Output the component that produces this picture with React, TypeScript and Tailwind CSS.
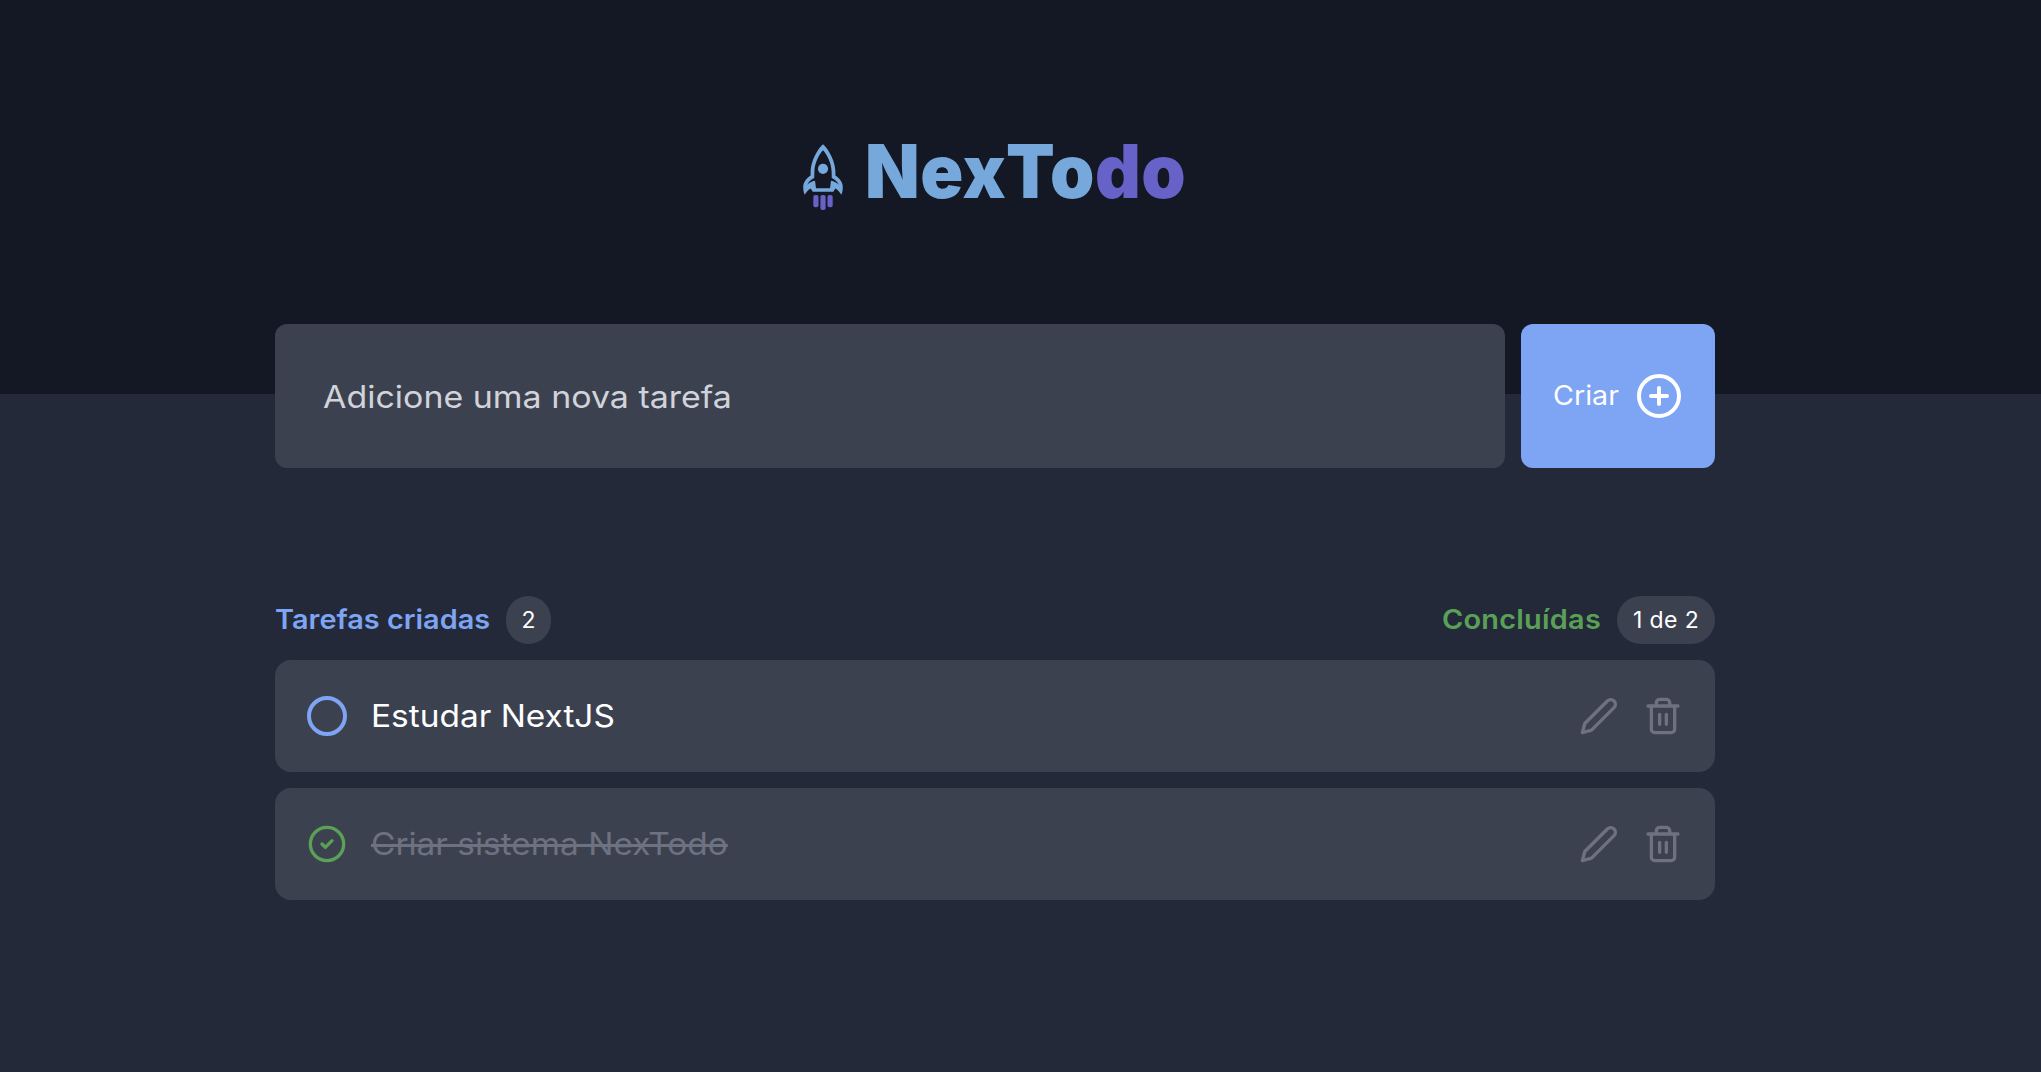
import { useState } from 'react';

type Task = { id: number; title: string; done: boolean };

const initialTasks: Task[] = [
  { id: 1, title: 'Estudar NextJS', done: false },
  { id: 2, title: 'Criar sistema NexTodo', done: true },
];

const stroke = {
  viewBox: '0 0 24 24',
  fill: 'none',
  stroke: 'currentColor',
  strokeWidth: 2,
  strokeLinecap: 'round',
  strokeLinejoin: 'round',
} as const;

function RocketIcon() {
  return (
    <svg className="mt-1.5 h-[74px] w-[46px] shrink-0" viewBox="800 140 46 74">
      <path
        fill="#76a8db"
        fillRule="evenodd"
        d="M823 144.3C829 149.5 835.4 162 835.4 171.5L835.4 175.4C839.5 178 842.8 182 842.8 187C842.8 190 842.3 192.5 841.3 194.7C839.6 191.8 837.6 189.7 835.3 188.5L833.3 191.7H812.7L810.7 188.5C808.4 189.7 806.4 191.8 804.7 194.7C803.7 192.5 803.2 190 803.2 187C803.2 182 806.5 178 810.6 175.4L810.6 171.5C810.6 162 817 149.5 823 144.3ZM823 150.2C819 154.5 814.4 163.5 814.4 171.5L814.2 177.9C811.4 179.3 808.2 181.6 807.2 184.7C809.2 182.7 811.8 181.3 815 180.7L816 188.2H830L831 180.7C834.2 181.3 836.8 182.7 838.8 184.7C837.8 181.6 834.6 179.3 831.8 177.9L831.6 171.5C831.6 163.5 827 154.5 823 150.2Z"
      />
      <circle cx="823" cy="168.8" r="5.1" fill="#76a8db" />
      <g fill="#6762c8">
        <rect x="813.3" y="195" width="5.2" height="12.3" rx="2" />
        <rect x="820.4" y="195" width="5.2" height="15" rx="2" />
        <rect x="827.5" y="195" width="5.2" height="12.3" rx="2" />
      </g>
    </svg>
  );
}

function PlusCircleIcon() {
  return (
    <svg {...stroke} className="size-12 shrink-0">
      <circle cx="12" cy="12" r="10" />
      <path d="M12 8v8M8 12h8" />
    </svg>
  );
}

function CheckCircleIcon() {
  return (
    <svg {...stroke} className="size-10 text-[#5aa157]">
      <circle cx="12" cy="12" r="10" />
      <path d="m9 12 2 2 4-4" />
    </svg>
  );
}

function PencilIcon() {
  return (
    <svg {...stroke} className="size-10">
      <path d="M17 3a2.828 2.828 0 1 1 4 4L7.5 20.5 2 22l1.5-5.5L17 3z" />
    </svg>
  );
}

function TrashIcon() {
  return (
    <svg {...stroke} className="size-10">
      <path d="M3 6h18M19 6v14a2 2 0 0 1-2 2H7a2 2 0 0 1-2-2V6m3 0V4a2 2 0 0 1 2-2h4a2 2 0 0 1 2 2v2M10 11v6M14 11v6" />
    </svg>
  );
}

export default function App() {
  const [tasks, setTasks] = useState(initialTasks);
  const done = tasks.filter((t) => t.done).length;

  const toggle = (id: number) =>
    setTasks((list) => list.map((t) => (t.id === id ? { ...t, done: !t.done } : t)));
  const remove = (id: number) => setTasks((list) => list.filter((t) => t.id !== id));

  return (
    <div className="min-h-screen bg-[#232938] font-['Inter',sans-serif] text-white">
      <header className="h-[394px] bg-[#141824] pt-[134px] pl-[800px]">
        <h1 className="flex h-20 items-center gap-[18.5px]">
          <RocketIcon />
          <span className="-mt-1.5 origin-left scale-x-[0.96] text-[74px] leading-none font-black tracking-[0.6px] whitespace-nowrap text-[#76a8db]">
            NexTo<span className="text-[#6762c8]">do</span>
          </span>
        </h1>
      </header>

      <main className="relative -mt-[70px] ml-[275px] w-[1440px]">
        <form className="flex h-36 gap-4" onSubmit={(e) => e.preventDefault()}>
          <div className="min-w-0 flex-1 rounded-xl bg-[#3c4150] px-12">
            <input
              className="h-full w-[91%] origin-left scale-x-[1.095] bg-transparent text-[31px] outline-none placeholder:text-[#d1d3da] placeholder:opacity-100"
              placeholder="Adicione uma nova tarefa"
            />
          </div>
          <button className="flex w-[194px] items-center justify-between rounded-xl bg-[#7ea4f4] px-8 text-[27px]">
            <span className="origin-left scale-x-[1.06]">Criar</span>
            <PlusCircleIcon />
          </button>
        </form>

        <section className="mt-32">
          <div className="flex h-12 items-center justify-between">
            <div className="flex items-center gap-4">
              <span className="w-[215px] text-[27px] font-semibold whitespace-nowrap text-[#7ea4f4]">
                <span className="inline-block origin-left scale-x-[1.07]">Tarefas criadas</span>
              </span>
              <span className="flex h-12 w-[45px] items-center justify-center rounded-3xl bg-[#3c4150] text-[23px]">
                {tasks.length}
              </span>
            </div>
            <div className="flex items-center gap-4">
              <span className="w-[159px] text-[27px] font-semibold tracking-[0.22px] whitespace-nowrap text-[#5aa157]">
                <span className="inline-block origin-left scale-x-[1.07]">Concluídas</span>
              </span>
              <span className="flex h-12 w-[98px] items-center justify-center rounded-3xl bg-[#3c4150] text-[23px] tracking-[0.37px] whitespace-nowrap">
                {done} de {tasks.length}
              </span>
            </div>
          </div>

          <ul className="mt-4 flex flex-col gap-4">
            {tasks.map((task) => (
              <li key={task.id} className="flex h-28 items-center gap-6 rounded-2xl bg-[#3c4150] px-8">
                <button onClick={() => toggle(task.id)} className="size-10 shrink-0">
                  {task.done ? (
                    <CheckCircleIcon />
                  ) : (
                    <span className="block size-10 rounded-full border-4 border-[#7ea4f4]" />
                  )}
                </button>
                <div className="flex-1 text-[31px]">
                  <span
                    className={`inline-block origin-left scale-x-[1.078] ${
                      task.done ? 'text-[#6e7180] line-through decoration-[3px]' : ''
                    }`}
                  >
                    {task.title}
                  </span>
                </div>
                <div className="flex gap-6 text-[#6e7180]">
                  <button>
                    <PencilIcon />
                  </button>
                  <button onClick={() => remove(task.id)}>
                    <TrashIcon />
                  </button>
                </div>
              </li>
            ))}
          </ul>
        </section>
      </main>
    </div>
  );
}
